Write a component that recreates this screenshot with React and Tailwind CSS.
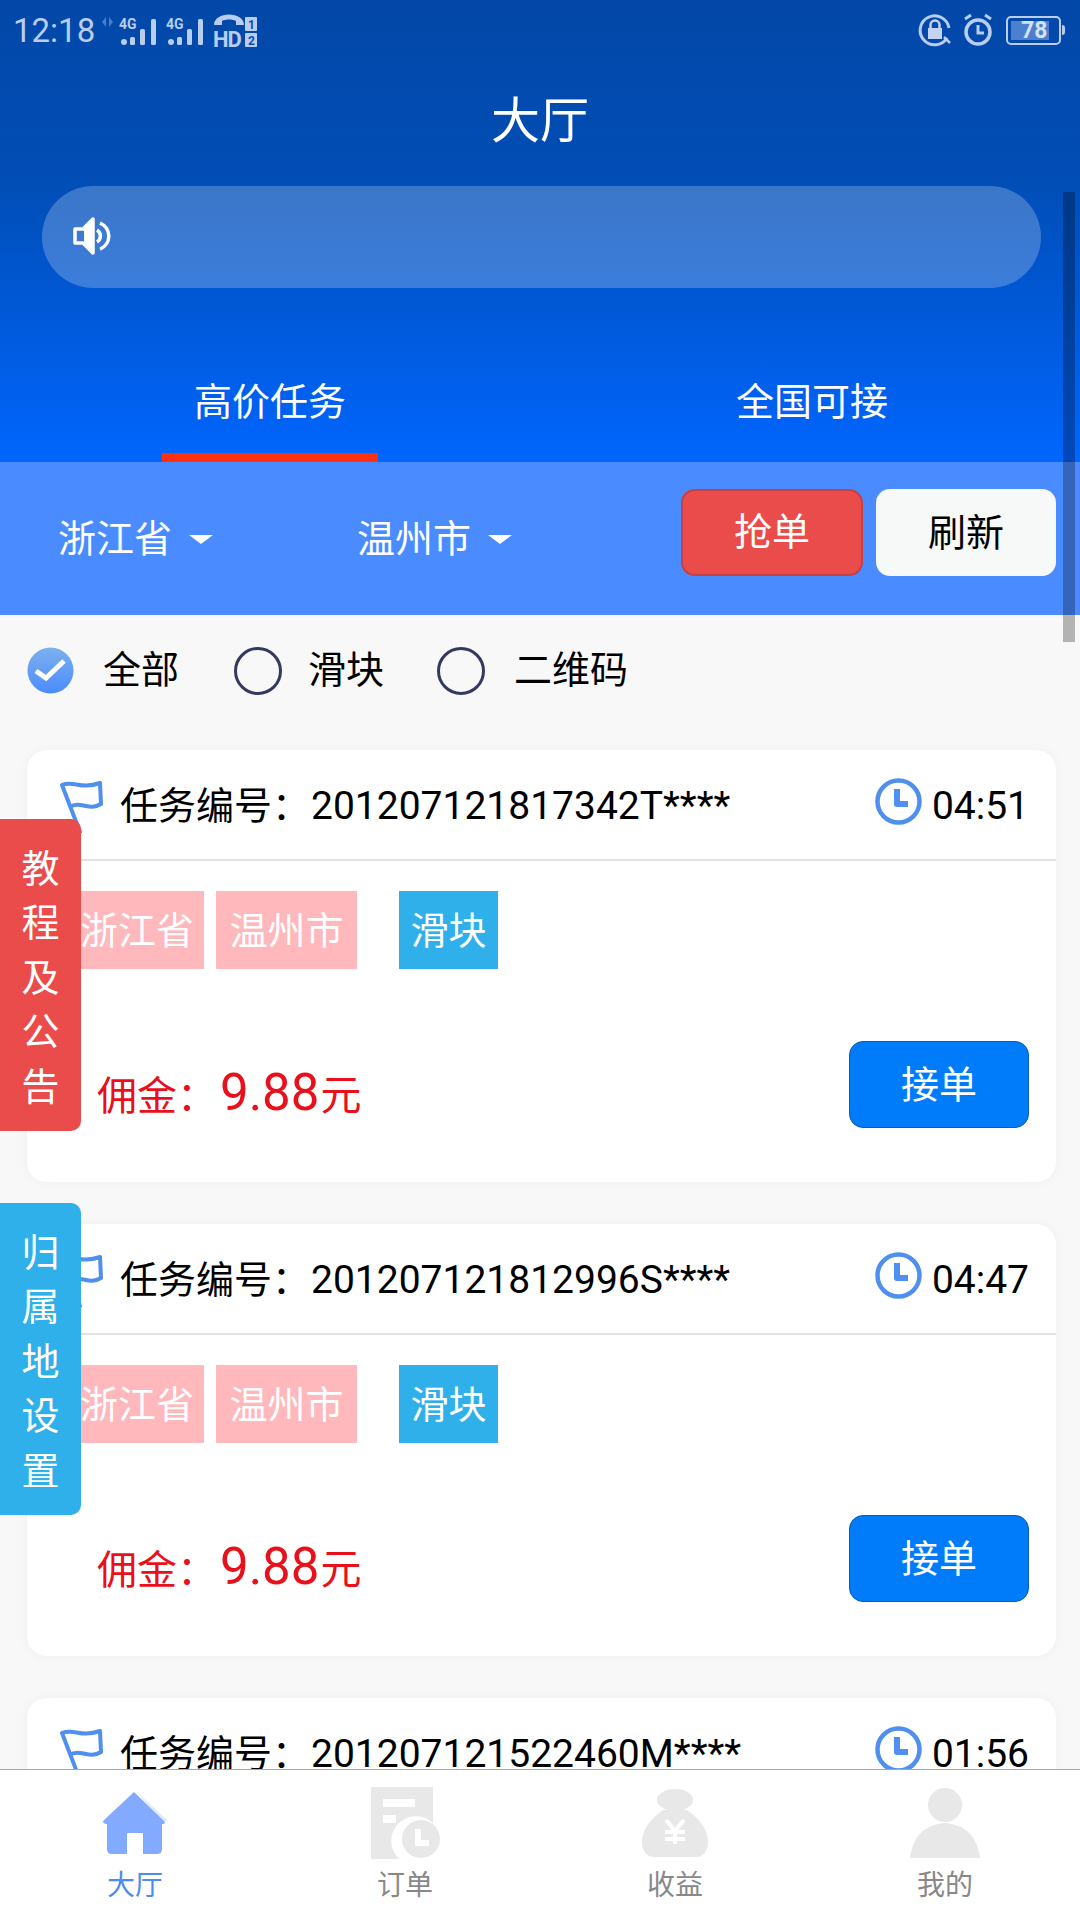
const FONT = 'font-["Roboto","Noto_Sans_CJK_SC",sans-serif]';

function Signal({ x }) {
  return (
    <g transform={`translate(${x} 0)`} fill="#b9cdf0">
      <circle cx="5" cy="37" r="3" />
      <rect x="11" y="32" width="5" height="8" rx="1.5" />
      <rect x="21" y="24" width="5" height="16" rx="1.5" />
      <rect x="32" y="14" width="5" height="26" rx="1.5" />
      <text x="0" y="24" fontSize="14" fontWeight="700" fontFamily="Roboto">4G</text>
    </g>
  );
}

function StatusBar() {
  return (
    <div className="flex h-[60px] items-center justify-between text-[#b9cdf0]">
      <div className="flex items-center">
        <span className="ml-[13px] text-[33px] leading-none">12:18</span>
        <svg width="162" height="50" viewBox="0 0 162 50" className="ml-[3px]" fill="#b9cdf0">
          <path d="M8 12 L4 17 L8 22 Z M11 12 L15 17 L11 22 Z" opacity="0.4" />
          <Signal x="21" />
          <Signal x="68" />
          <path d="M116 20 C116 6 146 6 146 20 L138 20 L138 16 C134 14 128 14 124 16 L124 20 Z" />
          <text x="115" y="42" fontSize="22" fontWeight="700" fontFamily="Roboto" letterSpacing="-1">HD</text>
          <rect x="147" y="12" width="12" height="14" rx="1" />
          <rect x="147" y="28" width="12" height="14" rx="1" />
          <text x="150" y="24" fontSize="12" fontWeight="700" fontFamily="Roboto" fill="#0a4bb0">1</text>
          <text x="150" y="40" fontSize="12" fontWeight="700" fontFamily="Roboto" fill="#0a4bb0">2</text>
        </svg>
      </div>
      <div className="mr-[15px] flex items-center">
        <svg width="34" height="34" viewBox="0 0 34 34" fill="none">
          <path d="M29 25 A14.5 14.5 0 1 1 31 15" stroke="#b9cdf0" strokeWidth="3" />
          <path d="M26 24 L32 30" stroke="#b9cdf0" strokeWidth="2.5" />
          <rect x="10" y="15" width="14" height="11" fill="#c4d3f0" />
          <path d="M12.5 15 V12 A4.5 4.5 0 0 1 21.5 12 V15" stroke="#c4d3f0" strokeWidth="2.5" />
        </svg>
        <svg width="30" height="34" viewBox="0 0 30 34" fill="none" className="ml-[11px]">
          <circle cx="15" cy="19" r="12" stroke="#b9cdf0" strokeWidth="3.5" />
          <path d="M15 12 V20 H21" stroke="#b9cdf0" strokeWidth="3" />
          <path d="M2 6 L8 2 M28 6 L22 2" stroke="#b9cdf0" strokeWidth="3" />
        </svg>
        <div className="ml-[13px] flex items-center">
          <div className="relative flex h-[29px] w-[55px] items-center rounded-[5px] border-2 border-[#b9cdf0] p-[3px]">
            <div className="h-full w-[38px] bg-[#4d7fd0]" />
            <span className="absolute left-[13px] text-[23px] font-bold leading-none text-[#d5e1f5]">78</span>
          </div>
          <div className="ml-[1px] h-[10px] w-[3px] rounded-r bg-[#b9cdf0]" />
        </div>
      </div>
    </div>
  );
}

function Header() {
  return (
    <div className="flex h-[462px] shrink-0 flex-col bg-gradient-to-b from-[#0348a8] via-[#014db5] via-[38%] to-[#0066ff] text-white">
      <StatusBar />
      <div className="flex h-[120px] items-center justify-center pt-[3px] text-[49px] leading-none">大厅</div>
      <div className="mx-[42px] mt-[6px] flex h-[102px] w-[999px] items-center rounded-full bg-white/[0.23] pl-[31px]">
        <svg width="38" height="38" viewBox="0 0 38 38" fill="none" className="mt-[-3px]">
          <path d="M2 12 H10 L20 2 V36 L10 26 H2 Z" stroke="#fff" strokeWidth="3.5" strokeLinejoin="round" fill="none" />
          <path d="M20 3 V35 L11 26 V12 Z" fill="#fff" />
          <path d="M24 13 A7 7 0 0 1 24 25" stroke="#fff" strokeWidth="3.5" />
          <path d="M27 6 A14 14 0 0 1 27 32" stroke="#fff" strokeWidth="3.5" />
        </svg>
      </div>
      <div className="mt-auto flex h-[120px] text-[38px]">
        <div className="relative flex w-[540px] items-center justify-center">
          高价任务
          <div className="absolute bottom-0 left-[162px] h-[9px] w-[216px] bg-[#ff3010]" />
        </div>
        <div className="flex w-[540px] items-center justify-center pl-[4px]">全国可接</div>
      </div>
    </div>
  );
}

function Arrow() {
  return <div className="ml-[17px] h-0 w-0 border-x-[12px] border-t-[9px] border-x-transparent border-t-white" />;
}

function FilterBar() {
  return (
    <div className="flex h-[153px] shrink-0 items-center bg-[#4a8cff] text-[38px] text-white">
      <div className="ml-[58px] flex w-[299px] items-center pt-[1px]">浙江省<Arrow /></div>
      <div className="flex items-center pt-[1px]">温州市<Arrow /></div>
      <div className="ml-auto mr-[24px] flex gap-[13px] pb-[12px] text-[38px]">
        <div className="flex h-[87px] w-[182px] items-center justify-center rounded-[14px] border-2 border-[#c94040] bg-[#ea4c4c]">抢单</div>
        <div className="flex h-[87px] w-[180px] items-center justify-center rounded-[14px] bg-[#f7f8f8] pt-[2px] text-black">刷新</div>
      </div>
    </div>
  );
}

function RadioRow() {
  return (
    <div className="flex h-[135px] shrink-0 items-center pb-[24px] text-[38px] text-black">
      <svg width="47" height="47" viewBox="0 0 47 47" className="ml-[27px]">
        <defs>
          <linearGradient id="chk" x1="0" y1="0" x2="0" y2="1">
            <stop offset="0" stopColor="#7db0ec" />
            <stop offset="1" stopColor="#4a8cff" />
          </linearGradient>
        </defs>
        <circle cx="23.5" cy="23.5" r="23" fill="url(#chk)" />
        <path d="M9 24 L19 31 L37 14" stroke="#fff" strokeWidth="5" fill="none" />
      </svg>
      <span className="ml-[29px] w-[131px]">全部</span>
      <div className="h-[48px] w-[48px] rounded-full border-[3px] border-[#33395f]" />
      <span className="ml-[26px] w-[129px]">滑块</span>
      <div className="h-[48px] w-[48px] rounded-full border-[3px] border-[#33395f]" />
      <span className="ml-[29px]">二维码</span>
    </div>
  );
}

function Flag() {
  return (
    <svg width="46" height="62" viewBox="0 0 46 62" fill="none" className="ml-[31px] mt-[-2px] shrink-0 self-start">
      <path d="M4 7 L22 54" stroke="#4f8ff0" strokeWidth="4" strokeLinecap="round" />
      <path d="M4 7 C16 2 22 12 42 5 L43 26 C30 34 24 22 11 29" stroke="#4f8ff0" strokeWidth="4" strokeLinejoin="round" />
    </svg>
  );
}

function Clock() {
  return (
    <svg width="47" height="47" viewBox="0 0 47 47" fill="none" className="mt-[-6px] shrink-0">
      <circle cx="23.5" cy="23.5" r="21" stroke="#4f8ff0" strokeWidth="4.5" />
      <path d="M22 11 V26 H33" stroke="#4f8ff0" strokeWidth="6" strokeLinejoin="round" />
    </svg>
  );
}

function Card({ no, time }) {
  return (
    <div className="mx-[27px] h-[432px] w-[1029px] shrink-0 rounded-[20px] bg-white text-[38px] text-black shadow-[0_0_12px_rgba(0,0,0,0.04)]">
      <div className="relative flex h-[111px] items-center overflow-hidden border-b-2 border-[#e2e2e2] pr-[27px]">
        <div className="flex h-full items-start pt-[30px]"><Flag /></div>
        <span className="ml-[16px] whitespace-nowrap pt-[3px]">任务编号：<span className="ml-[1px] text-[39px]">{no}</span></span>
        <div className="ml-auto flex items-center gap-[10px]">
          <Clock />
          <span className="pt-[3px] text-[39px]">{time}</span>
        </div>
      </div>
      <div className="mt-[30px] flex h-[78px] items-center text-white">
        <div className="ml-[43px] flex h-[78px] w-[134px] items-center justify-center bg-[#ffb8bb] pt-[3px]">浙江省</div>
        <div className="ml-[12px] flex h-[78px] w-[141px] items-center justify-center bg-[#ffb8bb] pt-[3px]">温州市</div>
        <div className="ml-[42px] flex h-[78px] w-[99px] items-center justify-center bg-[#2fb0ea] pt-[3px]">滑块</div>
      </div>
      <div className="mt-[72px] flex items-start">
        <div className="ml-[70px] mt-[14px] flex items-baseline text-[40px] text-[#e8101a]">
          佣金：<span className="ml-[3px] text-[51px]">9.88</span><span className="ml-[1px] text-[41px]">元</span>
        </div>
        <div className="ml-auto mr-[27px] flex h-[87px] w-[180px] items-center justify-center rounded-[14px] border border-[#0a5bb5] bg-[#007cfa] pt-[1px] text-white">接单</div>
      </div>
    </div>
  );
}

function SideTab({ chars, className }) {
  return (
    <div className={`absolute left-0 flex h-[312px] w-[81px] flex-col items-center justify-center rounded-r-[10px] pt-[6px] text-[38px] leading-[54.5px] text-white ${className}`}>
      {chars.map((c, i) => <span key={i}>{c}</span>)}
    </div>
  );
}

function NavItem({ label, active, children }) {
  return (
    <div className={`flex w-[270px] flex-col items-center ${active ? "text-[#4a8cf0]" : "text-[#888888]"}`}>
      <div className="flex h-[92px] items-center justify-center pt-[14px]">{children}</div>
      <span className="mt-[6px] text-[28px] leading-[36px]">{label}</span>
    </div>
  );
}

function BottomNav() {
  return (
    <div className="flex h-[151px] shrink-0 border-t border-[#a8a8a8] bg-white">
      <NavItem label="大厅" active>
        <svg width="66" height="68" viewBox="0 0 66 68">
          <path d="M32 0 L66 32 L60 32 Z" fill="#e3ebff" />
          <path d="M32 3 L63 33 Q63 35 60 35 V60 Q60 65 55 65 H41 V45 Q41 44 40 44 H26 Q25 44 25 45 V65 H10 Q5 65 5 60 V35 Q1 35 1 32 Z" fill="#82aaff" />
        </svg>
      </NavItem>
      <NavItem label="订单">
        <svg width="72" height="72" viewBox="0 0 72 72">
          <path d="M2 0 H64 V36 A24 24 0 0 0 30 72 H2 Z" fill="#e8e8e8" />
          <rect x="14" y="12" width="32" height="8" fill="#fff" />
          <rect x="14" y="28" width="13" height="8" fill="#fff" />
          <circle cx="52" cy="52" r="19" fill="#e8e8e8" />
          <path d="M49 42 V56 H60" stroke="#fff" strokeWidth="6" fill="none" />
        </svg>
      </NavItem>
      <NavItem label="收益">
        <svg width="68" height="70" viewBox="0 0 68 70">
          <ellipse cx="34" cy="12" rx="18" ry="11" fill="#e8e8e8" />
          <path d="M22 22 H46 C60 32 68 44 67 56 C66 66 60 69 54 69 H14 C8 69 2 66 1 56 C0 44 8 32 22 22 Z" fill="#e8e8e8" />
          <path d="M25 32 L34 43 L43 32 M34 43 V56 M24 44 H44 M24 51 H44" stroke="#fff" strokeWidth="4" fill="none" />
        </svg>
      </NavItem>
      <NavItem label="我的">
        <svg width="72" height="72" viewBox="0 0 72 72">
          <circle cx="36" cy="18" r="17" fill="#e8e8e8" />
          <path d="M1 71 C4 50 14 38 36 36 C58 38 68 50 71 71 Z" fill="#e8e8e8" />
        </svg>
      </NavItem>
    </div>
  );
}

export default function App() {
  return (
    <div className={`relative flex h-[1920px] w-[1080px] flex-col overflow-hidden bg-[#f8f8f8] ${FONT}`}>
      <Header />
      <FilterBar />
      <div className="flex min-h-0 flex-1 flex-col overflow-hidden">
        <RadioRow />
        <div className="flex flex-col gap-[42px]">
          <Card no="201207121817342T****" time="04:51" />
          <Card no="201207121812996S****" time="04:47" />
          <Card no="201207121522460M****" time="01:56" />
        </div>
      </div>
      <BottomNav />
      <SideTab chars={["教", "程", "及", "公", "告"]} className="top-[819px] bg-[#ea4c4c]" />
      <SideTab chars={["归", "属", "地", "设", "置"]} className="top-[1203px] bg-[#2fb0ea]" />
      <div className="absolute left-[1063px] top-[192px] h-[450px] w-[12px] bg-black/[0.28]" />
    </div>
  );
}
